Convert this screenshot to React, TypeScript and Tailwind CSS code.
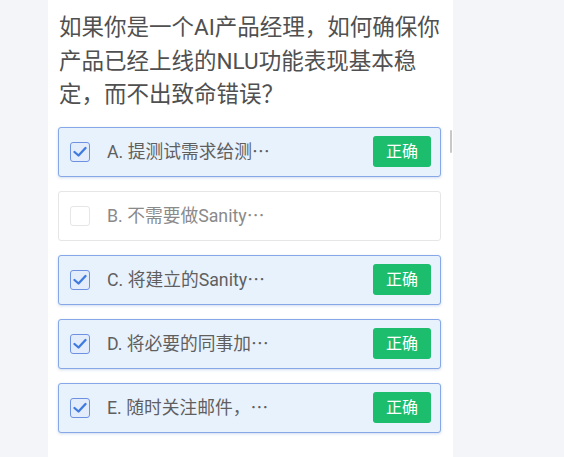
import React from "react";

const font = { fontFamily: 'Roboto, "Noto Sans CJK SC", sans-serif' };

type Opt = { label: string; checked: boolean };

const options: Opt[] = [
  { label: "A. 提测试需求给测", checked: true },
  { label: "B. 不需要做Sanity", checked: false },
  { label: "C. 将建立的Sanity", checked: true },
  { label: "D. 将必要的同事加", checked: true },
  { label: "E. 随时关注邮件，", checked: true },
];

function Check({ checked }: { checked: boolean }) {
  if (!checked) {
    return <div className="w-[20px] h-[20px] shrink-0 rounded-[3px] border border-[#e6e6e6] bg-white" />;
  }
  return (
    <div className="w-[20px] h-[20px] shrink-0 rounded-[3px] border-[1.5px] border-[#6e92e3] bg-[#e2ecfb] flex items-center justify-center">
      <svg width="14" height="12" viewBox="0 0 14 12">
        <polyline points="1.5,6 5.5,9.5 12.5,2" fill="none" stroke="#3f7ae0" strokeWidth="2.3" strokeLinecap="round" strokeLinejoin="round" />
      </svg>
    </div>
  );
}

export default function App() {
  return (
    <div lang="zh-CN" className="w-[564px] h-[457px] bg-[#f4f5f9] overflow-hidden" style={font}>
      <div className="relative ml-[48px] w-[405px] h-full bg-white pt-[11px] pl-[10px] pr-[12px]">
        <p className="pl-[1px] text-[22.5px] leading-[33.5px] text-[#505050] whitespace-nowrap">
          如果你是一个AI产品经理，如何确保你
          <br />
          产品已经上线的NLU功能表现基本稳
          <br />
          定，而不出致命错误？
        </p>
        <div className="mt-[15px] flex flex-col gap-[14px]">
          {options.map((o) => (
            <div
              key={o.label}
              className={
                o.checked
                  ? "h-[50px] flex items-center rounded-[3px] border border-[#86a8e6] bg-[#e8f2fd] shadow-[0_1px_3px_rgba(120,150,210,0.35)] pl-[11px] pr-[9px]"
                  : "h-[50px] flex items-center rounded-[3px] border border-[#e6e6e6] bg-white pl-[11px] pr-[9px]"
              }
            >
              <Check checked={o.checked} />
              <span className={"ml-[17px] flex-1 text-[17.75px] " + (o.checked ? "text-[#5f5f5f]" : "text-[#8a8a8a]")}>
                {o.label}
                <span className="inline-block" style={{ fontFamily: '"Noto Sans CJK SC", sans-serif' }}>⋯</span>
              </span>
              {o.checked && (
                <span className="w-[58px] h-[31px] rounded-[3px] bg-[#1cbd6c] text-white text-[16px] flex items-center justify-center">
                  正确
                </span>
              )}
            </div>
          ))}
        </div>
        <div className="absolute right-[1px] top-[130px] w-[2px] h-[23px] rounded-full bg-[#c8c8c8]" />
      </div>
    </div>
  );
}
